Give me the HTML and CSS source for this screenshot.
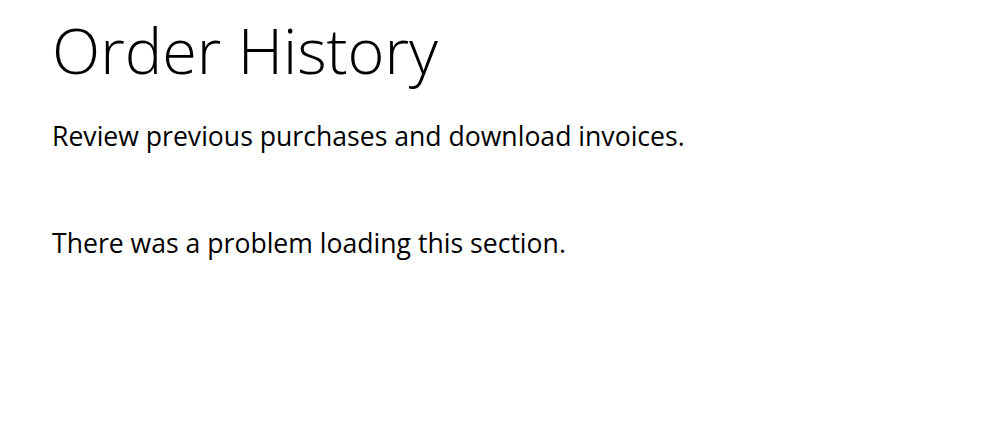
FILE: index.html
```html
<!DOCTYPE html>
<html>
<head>
<meta charset="utf-8">
<link rel="stylesheet" href="styles.css">
</head>
<body>
<main class="page">
  <h1 class="title">Order History</h1>
  <p class="subtitle">Review previous purchases and download invoices.</p>
  <p class="error">There was a problem loading this section.</p>
</main>
</body>
</html>
```
FILE: styles.css
```css
html, body {
  margin: 0;
  padding: 0;
  background: #ffffff;
}
body {
  font-family: "Open Sans", "Liberation Sans", sans-serif;
  color: #000000;
}
.page {
  padding: 12px 52px;
}
.title {
  font-weight: 300;
  font-size: 63px;
  line-height: 76px;
  margin: 0;
}
.subtitle {
  font-size: 26.6px;
  line-height: 40px;
  margin: 28px 0 0;
}
.error {
  font-size: 26.6px;
  line-height: 40px;
  margin: 67px 0 0;
}
```
